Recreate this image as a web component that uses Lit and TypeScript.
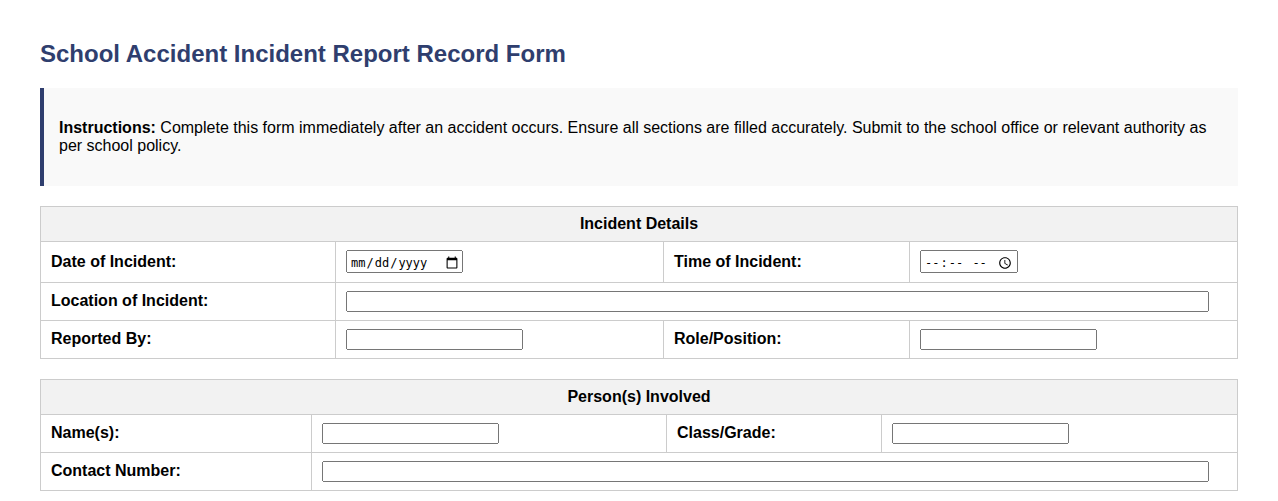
import { LitElement, html, css } from "lit";
import { customElement } from "lit/decorators.js";

@customElement("app-root")
export class AppRoot extends LitElement {
  static styles = css`
    :host { display: block; }
    .page { padding: 40px 40px 0; font-family: "Liberation Sans", Arial, sans-serif; font-size: 16px; color: #000; }
    h1 { margin: 0 0 20px; font-size: 24px; line-height: 28px; font-weight: 700; color: #2f3e6e; }
    .note { background: #f9f9f9; border-left: 4px solid #2f3e6e; padding: 15px; margin-bottom: 20px; }
    .note p { margin: 16px 0; line-height: 18px; }
    table { width: 100%; border-collapse: collapse; table-layout: fixed; margin-bottom: 20px; }
    th, td { border: 1px solid #ccc; padding: 8px 10px; text-align: left; }
    th { background: #f2f2f2; text-align: center; font-weight: 700; }
    td.label { font-weight: 700; padding-top: 7px; padding-bottom: 9px; }
    td.label.level { padding-top: 8px; padding-bottom: 8px; }
    td.tall { padding-bottom: 9px; }
    input.wide { width: 98%; box-sizing: border-box; }
    input.short { width: 177px; box-sizing: border-box; }
    input.date, input.time { box-sizing: border-box; height: 23px; padding: 2px 2px 0; font-family: "DejaVu Sans Mono", monospace; font-size: 12px; }
    input.date::-webkit-calendar-picker-indicator, input.time::-webkit-calendar-picker-indicator { width: 14px; height: 14px; padding: 0; margin-left: 0; }
    input.date::-webkit-calendar-picker-indicator { margin-right: 0; }
    input.time::-webkit-calendar-picker-indicator { margin-right: 2px; }
    input.date { width: 117px; }
    input.time { width: 98px; }
    .a1 { width: 295px; } .a2 { width: 328px; } .a3 { width: 246px; }
    .b1 { width: 271px; } .b2 { width: 355px; } .b3 { width: 215px; }
  `;

  render() {
    return html`
      <div class="page">
        <h1>School Accident Incident Report Record Form</h1>
        <div class="note">
          <p><strong>Instructions:</strong> Complete this form immediately after an accident occurs. Ensure all sections are filled accurately. Submit to the school office or relevant authority as per school policy.</p>
        </div>
        <table>
          <colgroup><col class="a1" /><col class="a2" /><col class="a3" /><col /></colgroup>
          <tr><th colspan="4">Incident Details</th></tr>
          <tr>
            <td class="label level">Date of Incident:</td><td class="tall"><input class="date" type="date" /></td>
            <td class="label level">Time of Incident:</td><td class="tall"><input class="time" type="time" /></td>
          </tr>
          <tr>
            <td class="label">Location of Incident:</td>
            <td colspan="3"><input class="wide" type="text" /></td>
          </tr>
          <tr>
            <td class="label">Reported By:</td><td><input class="short" type="text" /></td>
            <td class="label">Role/Position:</td><td><input class="short" type="text" /></td>
          </tr>
        </table>
        <table>
          <colgroup><col class="b1" /><col class="b2" /><col class="b3" /><col /></colgroup>
          <tr><th colspan="4">Person(s) Involved</th></tr>
          <tr>
            <td class="label">Name(s):</td><td><input class="short" type="text" /></td>
            <td class="label">Class/Grade:</td><td><input class="short" type="text" /></td>
          </tr>
          <tr>
            <td class="label">Contact Number:</td>
            <td colspan="3"><input class="wide" type="text" /></td>
          </tr>
        </table>
      </div>
    `;
  }
}
